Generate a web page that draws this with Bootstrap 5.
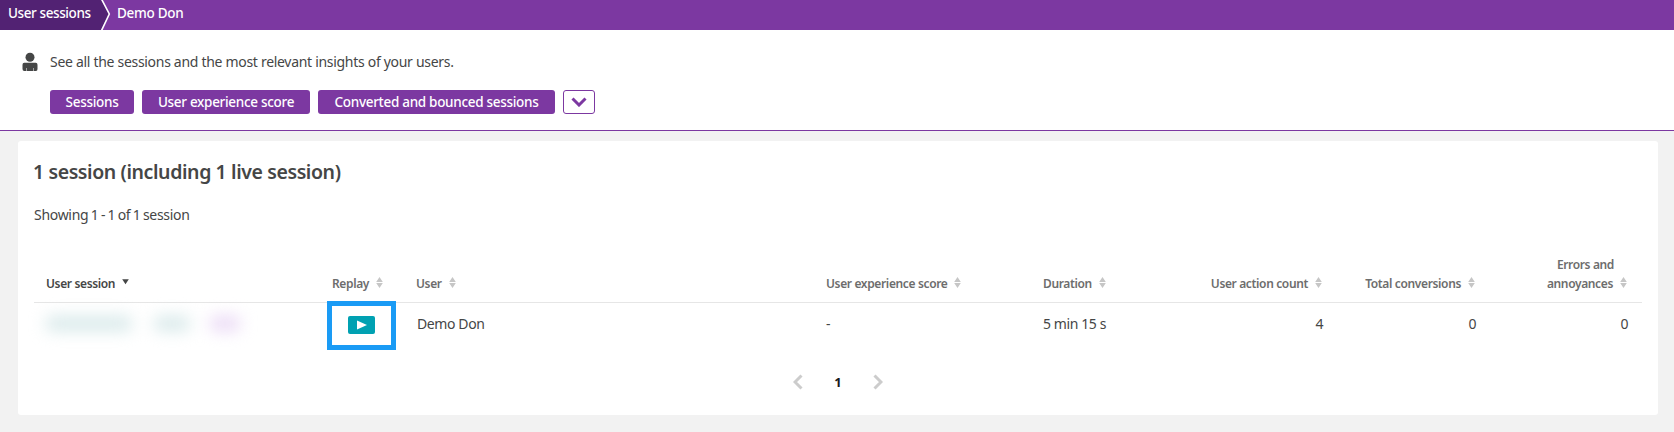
<!DOCTYPE html>
<html lang="en">
<head>
<meta charset="utf-8">
<meta name="viewport" content="width=device-width, initial-scale=1">
<title>User sessions</title>
<link href="https://cdn.jsdelivr.net/npm/bootstrap@5.3.0/dist/css/bootstrap.min.css" rel="stylesheet">
<style>
body{font-family:"Noto Sans","Open Sans",sans-serif;font-size:14px;line-height:20px;color:#454646;background:#f2f2f2}
.topbar{height:30px;background:#7c38a1;font-size:13.5px;font-weight:500;color:#fff;line-height:27px}
.crumb-root{background:#522273;width:101px;padding-left:8px;letter-spacing:-.4px}
.crumb-sep{width:10px;height:30px}
.crumb-here{padding-left:6px;letter-spacing:-.3px}
.intro{height:101px;border-bottom:1px solid #7c38a1}
.intro-text{letter-spacing:-.3px}
.pill{height:24px;padding:0;border:0;border-radius:3px;background:#7c38a1;color:#fff;font-size:13.5px;font-weight:500;line-height:24px;letter-spacing:-.3px}
.pill-more{width:32px;background:#fff;border:1px solid #7c38a1;display:flex;align-items:center;justify-content:center}
.panel{margin:10px 16px 0 18px;height:274px;border-radius:3px;padding:0 16px}
.panel h1{font-size:19.5px;font-weight:600;line-height:24px;padding-top:19px;margin:0 0 0 -1px;letter-spacing:-.4px}
.showing{letter-spacing:-.3px;word-spacing:-.9px}
.sessions{table-layout:fixed;width:1608px;margin:0;color:#454646}
.sessions th,.sessions td{padding:0 15px 0 12px;border:0;background:none;color:inherit;white-space:nowrap;box-shadow:none}
.sessions th{font-size:12px;font-weight:600;line-height:19px;letter-spacing:-.36px;color:#6d6d6d;vertical-align:bottom;padding-bottom:9px;height:59px;border-bottom:1px solid #e6e6e6}
.sessions td{height:45px;vertical-align:middle;padding-bottom:3px;padding-right:14px;letter-spacing:-.4px}
.sort{width:7px;height:11px;margin-left:7px;vertical-align:-.5px;fill:#c6c6c6}
.replay-box{position:relative;z-index:1;box-sizing:border-box;width:69px;height:49px;margin:-2px 0 -4px -5px;border:5px solid #1a9bf5;display:flex;align-items:center;justify-content:center}
.redacted{display:flex;filter:blur(8px);height:16px}
.redacted i{height:15px;border-radius:5px;background:#d8e9ea}
.page-no{font-size:13px;font-weight:700;color:#191919}
</style>
</head>
<body>
<nav class="topbar d-flex" aria-label="breadcrumb">
  <div class="crumb-root">User sessions</div>
  <svg class="crumb-sep" viewBox="0 0 10 30"><path d="M0 0 8 14 0 30z" fill="#522273"/><path d="M.5-1 8.3 14 .3 31" fill="none" stroke="#fff" stroke-width="1.6"/></svg>
  <div class="crumb-here">Demo Don</div>
</nav>
<header class="intro bg-white">
  <div class="d-flex" style="padding:22px 0 0 22px">
    <svg width="16" height="20" viewBox="0 0 16 20" fill="#454646"><circle cx="8" cy="5.3" r="4.5"/><path d="M2.3 10.700h11.400q1.800 0 1.800 2v4.200q0 2-1.500 2h-2v-3h-.5v3h-7v-3H4v3H2.300q-1.800 0-1.800-2v-4.200q0-2 1.800-2z"/></svg>
    <div class="intro-text ms-2 ps-1">See all the sessions and the most relevant insights of your users.</div>
  </div>
  <div class="d-flex gap-2" style="padding:18px 0 0 50px">
    <button class="btn pill" style="width:84px">Sessions</button>
    <button class="btn pill" style="width:168px">User experience score</button>
    <button class="btn pill" style="width:237px">Converted and bounced sessions</button>
    <button class="btn pill pill-more" aria-label="More"><svg width="16" height="10" viewBox="0 0 16 10"><path d="M1.500 1.500 8 8l6.500-6.500" fill="none" stroke="#7c38a1" stroke-width="3"/></svg></button>
  </div>
</header>
<main class="panel bg-white">
  <h1>1 session (including 1 live session)</h1>
  <div class="showing" style="padding-top:21px">Showing 1 - 1 of 1 session</div>
  <table class="table sessions" style="margin-top:18px">
    <colgroup><col style="width:286px"><col style="width:84px"><col style="width:410px"><col style="width:217px"><col style="width:90px"><col style="width:216px"><col style="width:153px"><col style="width:152px"></colgroup>
    <thead><tr>
      <th style="color:#454646">User session<svg class="sort" viewBox="0 0 6 10" style="fill:#454646"><path d="M0 2h6L3 6.500z"/></svg></th>
      <th>Replay<svg class="sort" viewBox="0 0 6 10"><path d="M0 4.500 3 0l3 4.500zM0 5.500h6L3 10z"/></svg></th>
      <th>User<svg class="sort" viewBox="0 0 6 10"><path d="M0 4.500 3 0l3 4.500zM0 5.500h6L3 10z"/></svg></th>
      <th>User experience score<svg class="sort" viewBox="0 0 6 10"><path d="M0 4.500 3 0l3 4.500zM0 5.500h6L3 10z"/></svg></th>
      <th>Duration<svg class="sort" viewBox="0 0 6 10"><path d="M0 4.500 3 0l3 4.500zM0 5.500h6L3 10z"/></svg></th>
      <th class="text-end">User action count<svg class="sort" viewBox="0 0 6 10"><path d="M0 4.500 3 0l3 4.500zM0 5.500h6L3 10z"/></svg></th>
      <th class="text-end">Total conversions<svg class="sort" viewBox="0 0 6 10"><path d="M0 4.500 3 0l3 4.500zM0 5.500h6L3 10z"/></svg></th>
      <th class="text-end"><span style="margin-right:13px">Errors and</span><br>annoyances<svg class="sort" viewBox="0 0 6 10"><path d="M0 4.500 3 0l3 4.500zM0 5.500h6L3 10z"/></svg></th>
    </tr></thead>
    <tbody><tr>
      <td><div class="redacted"><i style="width:86px"></i><i style="width:36px;margin-left:22px"></i><i style="width:30px;margin-left:20px;background:#ead9f5"></i></div></td>
      <td><div class="replay-box"><svg width="27" height="18" viewBox="0 0 27 18"><rect width="27" height="18" rx="2" fill="#00a1b2"/><path d="m9 4.500 10 4.500-10 4.500z" fill="#fff"/></svg></div></td>
      <td style="padding-left:13px">Demo Don</td>
      <td>-</td>
      <td style="padding-right:0">5 min 15 s</td>
      <td class="text-end">4</td>
      <td class="text-end">0</td>
      <td class="text-end">0</td>
    </tr></tbody>
  </table>
  <div class="d-flex justify-content-center align-items-center" style="padding-top:23px">
    <svg width="10" height="16" viewBox="0 0 10 16"><path d="M8.500 1.500 2 8l6.500 6.500" fill="none" stroke="#ccc" stroke-width="3"/></svg>
    <span class="page-no text-center" style="width:70px">1</span>
    <svg width="10" height="16" viewBox="0 0 10 16"><path d="M1.500 1.500 8 8l-6.500 6.500" fill="none" stroke="#ccc" stroke-width="3"/></svg>
  </div>
</main>
<script src="https://cdn.jsdelivr.net/npm/bootstrap@5.3.0/dist/js/bootstrap.bundle.min.js"></script>
</body>
</html>
